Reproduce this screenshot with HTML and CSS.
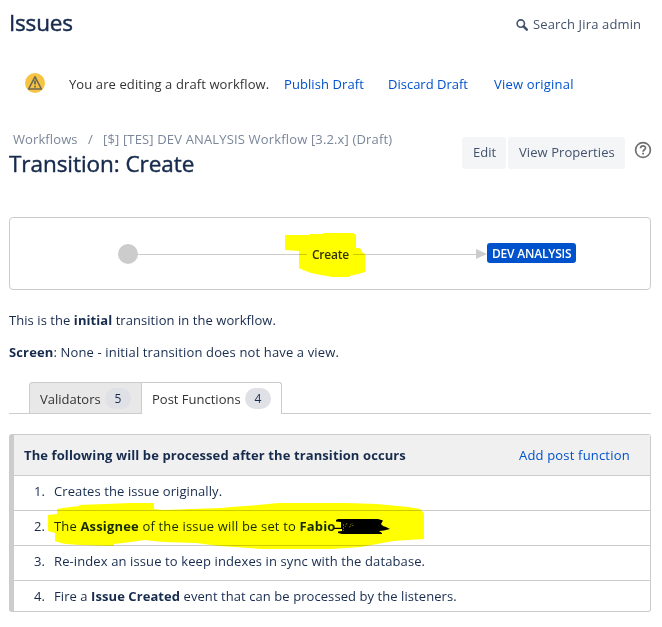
FILE: index.html
```html
<!DOCTYPE html>
<html lang="en">
<head>
<meta charset="utf-8">
<title>Transition: Create</title>
<link rel="stylesheet" href="styles.css">
</head>
<body>
<header class="top">
  <h1>Issues</h1>
  <a class="search"><svg width="12" height="12" viewBox="0 0 12 12"><circle cx="4.8" cy="4.6" r="3.7" fill="none" stroke="#42526e" stroke-width="1.6"/><path d="M7.6 7.4L10.8 10.6" stroke="#42526e" stroke-width="2.5" stroke-linecap="round"/></svg><span>Search Jira admin</span></a>
</header>
<section class="draft">
  <svg class="warn" width="20" height="20" viewBox="0 0 20 20"><circle cx="10" cy="10" r="10" fill="#f6c342"/><path d="M10 3.8L16.4 16H3.6Z" fill="none" stroke="#6b6754" stroke-width="1.6" stroke-linejoin="round"/><path d="M10 7.6V11.6M10 12.7V14.4" stroke="#6b6754" stroke-width="1.8"/></svg>
  <span class="draft-text">You are editing a draft workflow.</span>
  <a class="publish">Publish Draft</a><a class="discard">Discard Draft</a><a class="original">View original</a>
</section>
<section class="heading">
  <div class="titles">
    <nav class="crumbs"><span class="c1">Workflows</span><span class="slash">/</span><span class="c2">[$] [TES] DEV ANALYSIS Workflow [3.2.x] (Draft)</span></nav>
    <h2>Transition: Create</h2>
  </div>
  <div class="actions"><button class="edit"><span>Edit</span></button><button class="props"><span>View Properties</span></button>
    <svg class="help" width="18" height="18" viewBox="0 0 18 18"><circle cx="9" cy="9" r="7.4" fill="none" stroke="#707070" stroke-width="1.7"/><path d="M6.5 7.2C6.7 4 11.5 4.1 11.5 7C11.5 8.7 9.1 8.8 9.1 10.7" fill="none" stroke="#707070" stroke-width="1.7"/><path d="M9.1 11.8V13.6" stroke="#707070" stroke-width="1.8"/></svg>
  </div>
</section>
<section class="flow">
  <i class="dot"></i><i class="line l1"></i><span class="create">Create</span><i class="line l2"></i><i class="arrow"></i><span class="status"><span>DEV ANALYSIS</span></span>
  <svg class="marker mark-create" width="82" height="46" viewBox="0 0 82 46"><path d="M0 3H25V2H38V1H68L71 3V16H75L77 20L80 22V40L73 42L65 44V45H47L36 43L26 41L18 38L14 36V19L0 18Z" fill="#ff0"/></svg>
</section>
<p class="p1"><span>This is the <b>initial</b> transition in the workflow.</span></p>
<p class="p2"><span><b>Screen</b>: None - initial transition does not have a view.</span></p>
<nav class="tabs">
  <div class="tab validators"><span>Validators</span><em>5</em></div>
  <div class="tab active"><span>Post Functions</span><em>4</em></div>
</nav>
<section class="panel">
  <div class="panel-head"><b>The following will be processed after the transition occurs</b><a>Add post function</a></div>
  <ol>
    <li><i>1.</i><span class="r1">Creates the issue originally.</span></li>
    <li><i>2.</i><span class="r2">The <b>Assignee</b> of the issue will be set to <b>Fabio</b></span>
      <svg class="marker mark-row" width="377" height="48" viewBox="0 0 377 48"><path d="M9 6L15 5L31 3V2L83 0H106V6L115 7L173 5L183 4L210 2L230 0H298L329 1L360 4L372 6L376 10V36L345 38L329 41L313 44L298 45L283 46H214L172 43L163 42L148 40L115 39L97 37L75 40L66 41V43L32 42L18 41L13 40L7 38V30L0 28V12L9 11Z" fill="#ff0"/></svg>
      <svg class="scribble" width="58" height="16" viewBox="0 0 58 16"><path d="M4 1L6 0H46L51 1.5L49 5L51 7L54 8L58 10L52 11.5L47 12L50 14V15H10L6 14V12.5L10 12V10H2V8.8H9V3L4 2.5Z" fill="#000"/><path d="M11.5 5V12M15 4L13 8M18 6L21 4M17 8L22 6" stroke="#665f00" stroke-width="1" stroke-dasharray="2 1"/></svg></li>
    <li><i>3.</i><span class="r3">Re-index an issue to keep indexes in sync with the database.</span></li>
    <li><i>4.</i><span class="r4">Fire a <b>Issue Created</b> event that can be processed by the listeners.</span></li>
  </ol>
</section>
</body>
</html>
```
FILE: styles.css
```css
* { box-sizing: border-box; }
body { margin: 0; width: 662px; height: 627px; overflow: hidden; padding: 0 11px 0 9px; background: #fff; color: #172b4d; font: 13px/20px "Open Sans", "Noto Sans", sans-serif; white-space: nowrap; }
h1, h2, p, ol { margin: 0; padding: 0; }
h1, h2 { font-size: 22.5px; line-height: 30px; font-weight: 400; -webkit-text-stroke: 0.45px #172b4d; }
h1 { letter-spacing: -0.2px; }
h2 { letter-spacing: -0.05px; }
i, em { font-style: normal; }
b { font-weight: 700; }
a { color: #0052cc; }
.top { display: flex; justify-content: space-between; height: 64px; padding-top: 8px; }
.top .search { display: flex; color: #42526e; width: 136px; padding-top: 6px; letter-spacing: 0.15px; }
.search svg { margin: 5px 5px 0 1px; }
.draft { display: flex; height: 65px; padding: 10px 0 0 16px; color: #333; }
.warn { margin-right: 24px; margin-top: -1px; }
.draft-text { width: 215px; letter-spacing: 0.1px; }
.publish { width: 104px; letter-spacing: 0.08px; }
.discard { width: 106px; }
.original { letter-spacing: 0.2px; }
.heading { display: flex; justify-content: space-between; height: 88px; }
.crumbs { display: flex; height: 20px; padding-left: 4px; color: #7a869a; letter-spacing: 0.1px; }
.c1 { width: 75px; }
.slash { width: 15px; }
.c2 { letter-spacing: 0.155px; }
.actions { display: flex; padding-top: 8px; }
button { border: 0; border-radius: 3px; background: #f4f5f7; color: #42526e; font: inherit; height: 32px; padding: 0 0 2px 11px; text-align: left; margin-right: 2px; }
.edit { width: 44px; }
.props { width: 117px; letter-spacing: 0.07px; }
.help { margin: 4px -1px 0 7px; }
.flow { position: relative; display: flex; align-items: center; height: 73px; border: 1px solid #ccc; border-radius: 4px; padding-left: 108px; }
.dot { width: 20px; height: 20px; border-radius: 50%; background: #ccc; }
.line { height: 1px; background: #ccc; margin-top: 1px; }
.l1 { width: 169px; }
.l2 { width: 123px; }
.create { width: 46px; padding: 2px 0 0 5px; font-size: 12px; font-weight: 600; letter-spacing: -0.25px; color: #333; }
.arrow { border: solid transparent; border-width: 5px 0 5px 11px; border-left-color: #ccc; }
.status { width: 89px; height: 20px; margin: -1px 0 0 0; padding-left: 5px; line-height: 21px; border-radius: 3px; background: #0052cc; color: #fff; font-size: 12px; font-weight: 600; letter-spacing: -0.2px; }
.marker { position: absolute; mix-blend-mode: multiply; }
.mark-create { left: 275px; top: 14px; }
.p1 { height: 52px; padding-top: 20px; letter-spacing: 0.06px; }
.p2 { height: 40px; letter-spacing: 0.14px; }
.tabs { display: flex; height: 32px; padding-left: 20px; box-shadow: inset 0 -1px #ccc; }
.tab { display: flex; align-items: center; border: 1px solid #ccc; border-radius: 3px 0 0 0; padding: 2px 0 0 10px; color: #333; background: #fff; }
.validators { width: 113px; background: #e8e8e8; }
.active { width: 141px; margin-left: -1px; padding-bottom: 1px; border-bottom: 0; border-radius: 0 3px 0 0; }
.tab span { width: 65px; }
.active span { width: 93px; }
.tab em { width: 26px; height: 21px; margin-top: -2px; border-radius: 11px; background: #dfe1e6; color: #172b4d; text-align: center; font-size: 12px; line-height: 22px; font-weight: 500; }
.panel { height: 178px; margin-top: 20px; border: 1px solid #ccc; border-left-width: 5px; border-radius: 3px; }
.panel-head { display: flex; justify-content: space-between; height: 41px; padding: 10px 0 0 10px; border-bottom: 1px solid #ccc; background: #f0f0f0; }
.panel-head b { letter-spacing: 0.1px; }
.panel-head a { width: 131px; letter-spacing: 0.18px; }
ol { list-style: none; }
li { position: relative; display: flex; height: 35px; padding: 5px 0 0 20px; border-bottom: 1px solid #ccc; }
li:last-child { border: 0; }
li i { width: 20px; }
.r1 { letter-spacing: 0.09px; }
.r2 { letter-spacing: 0.165px; }
.r3 { letter-spacing: 0.11px; }
.r4 { letter-spacing: 0.07px; }
.mark-row { left: 34px; top: -8px; z-index: 1; }
.scribble { position: absolute; left: 318px; top: 8px; z-index: 2; }
```
